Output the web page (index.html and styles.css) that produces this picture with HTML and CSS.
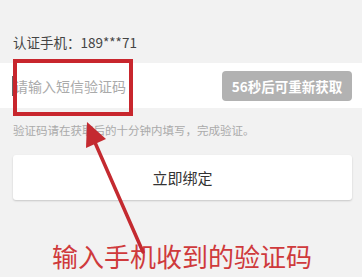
FILE: index.html
```html
<!DOCTYPE html>
<html lang="zh">
<head>
<meta charset="utf-8">
<link rel="stylesheet" href="styles.css">
</head>
<body>
<div class="page">
  <div class="phone">认证手机：189***71</div>
  <div class="code-row">
    <span class="caret"></span>
    <span class="placeholder">请输入短信验证码</span>
    <span class="resend">56秒后可重新获取</span>
  </div>
  <p class="hint">验证码请在获取后的十分钟内填写，完成验证。</p>
  <div class="bind">立即绑定</div>
  <div class="annot">输入手机收到的验证码</div>
  <div class="box"></div>
  <svg class="arrow" width="362" height="277" viewBox="0 0 362 277">
    <line x1="93" y1="138" x2="143" y2="252" stroke="#c42a30" stroke-width="3.5" stroke-linecap="round"/>
    <polygon points="87,122 106,139 86,148" fill="#c42a30"/>
  </svg>
</div>
</body>
</html>
```
FILE: styles.css
```css
html, body {
  margin: 0;
  padding: 0;
}
body {
  background: #f2f2f2;
  font-family: "Noto Sans CJK SC", "Noto Sans", sans-serif;
}
.page {
  position: relative;
  width: 362px;
  height: 277px;
  overflow: hidden;
  display: flex;
  flex-direction: column;
}
.page > * {
  flex-shrink: 0;
}
.phone {
  padding: 33px 0 0 13px;
  height: 63px;
  box-sizing: border-box;
  font-size: 13.5px;
  line-height: 18px;
  color: #444;
}
.code-row {
  height: 45px;
  background: #fff;
  display: flex;
  align-items: center;
  padding: 0 10px 0 12px;
}
.caret {
  width: 2px;
  height: 20px;
  background: #666;
}
.placeholder {
  font-size: 14px;
  color: #aaa;
  flex: 1;
}
.resend {
  width: 130px;
  height: 30px;
  border-radius: 4px;
  background: #b2b2b2;
  color: #fff;
  font-size: 13.5px;
  font-weight: bold;
  display: flex;
  align-items: center;
  justify-content: center;
}
.hint {
  margin: 0;
  padding: 14px 0 0 13px;
  height: 47px;
  box-sizing: border-box;
  font-size: 11.5px;
  line-height: 16px;
  color: #aaa;
}
.bind {
  margin: 0 10px 0 13px;
  height: 45px;
  background: #fff;
  border-radius: 3px;
  box-shadow: 0 1px 2px rgba(0, 0, 0, 0.18);
  display: flex;
  align-items: center;
  justify-content: center;
  font-size: 15px;
  color: #333;
}
.annot {
  margin-top: 41px;
  padding-left: 52px;
  font-size: 26px;
  line-height: 30px;
  color: #cf3a3c;
}
.box {
  position: absolute;
  left: 13px;
  top: 59px;
  width: 120px;
  height: 57px;
  box-sizing: border-box;
  border: 4px solid #c8262d;
}
.arrow {
  position: absolute;
  left: 0;
  top: 0;
}
```
